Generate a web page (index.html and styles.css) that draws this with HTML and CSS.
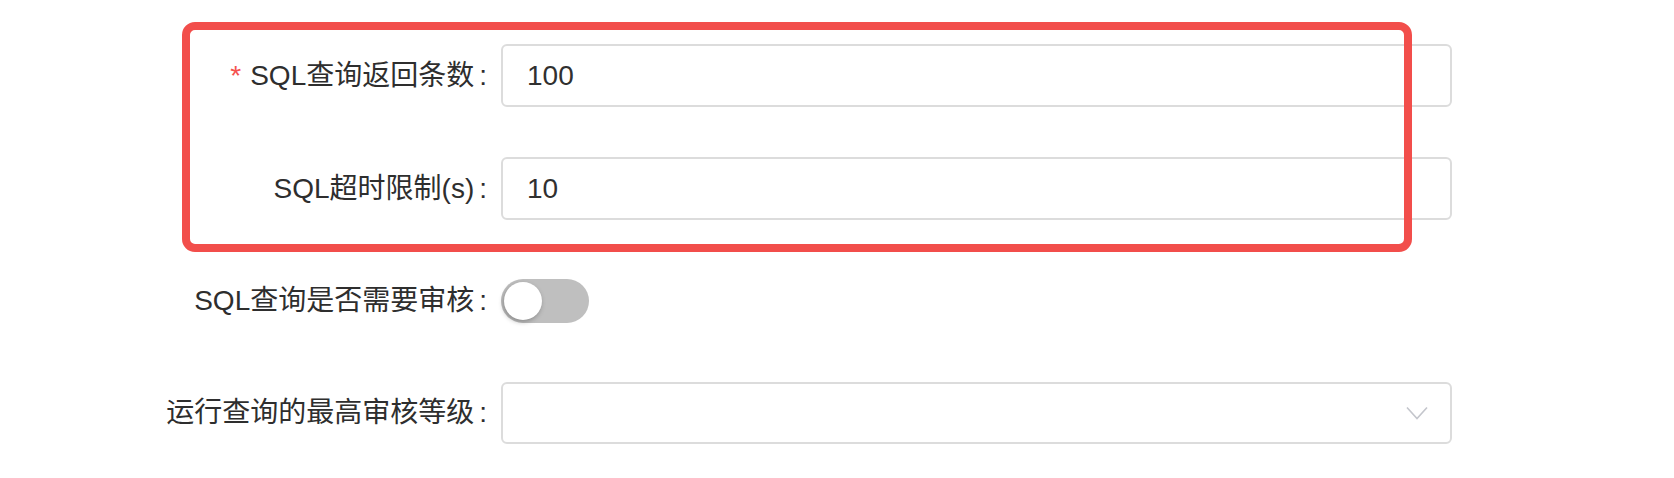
FILE: index.html
```html
<!DOCTYPE html>
<html lang="zh-CN">
<head>
<meta charset="utf-8">
<title>SQL 查询设置</title>
<link rel="stylesheet" href="styles.css">
</head>
<body>
<div class="page">
  <form class="form">
    <div class="row row-first">
      <label class="label"><span class="req">*</span>SQL查询返回条数<span class="colon">:</span></label>
      <input class="input" type="text" value="100">
    </div>
    <div class="row">
      <label class="label">SQL超时限制(s)<span class="colon">:</span></label>
      <input class="input" type="text" value="10">
    </div>
    <div class="row">
      <label class="label">SQL查询是否需要审核<span class="colon">:</span></label>
      <span class="switch"><span class="knob"></span></span>
    </div>
    <div class="row">
      <label class="label">运行查询的最高审核等级<span class="colon">:</span></label>
      <div class="select">
        <svg class="chevron" width="22" height="14" viewBox="0 0 22 14"><polyline points="1,1.5 11,12.5 21,1.5" fill="none" stroke="#c4c6cc" stroke-width="1.6" stroke-linejoin="miter"/></svg>
      </div>
    </div>
  </form>
  <div class="highlight"></div>
</div>
</body>
</html>
```

FILE: styles.css
```css
html, body {
  margin: 0;
  padding: 0;
  background: #ffffff;
}

body {
  font-family: "Liberation Sans", "Noto Sans CJK SC", sans-serif;
}

.page {
  position: relative;
  width: 1674px;
  height: 478px;
  overflow: hidden;
}

.form {
  padding-top: 44px;
}

.row {
  display: flex;
  align-items: center;
  height: 63px;
  margin-bottom: 49px;
}

.row-first {
  margin-bottom: 50px;
}

.label {
  width: 501px;
  box-sizing: border-box;
  padding-right: 14px;
  text-align: right;
  font-size: 28px;
  line-height: 63px;
  color: #2e2e2e;
  white-space: nowrap;
}

.colon {
  margin-left: 5px;
}

.req {
  color: #f5524f;
  margin-right: 9px;
}

.input {
  width: 951px;
  height: 63px;
  box-sizing: border-box;
  margin: 0;
  border: 2px solid #dcdcdc;
  border-radius: 6px;
  padding: 0 24px;
  font-family: "Liberation Sans", "Noto Sans CJK SC", sans-serif;
  font-size: 28px;
  color: #303030;
  background: #ffffff;
  outline: none;
}

.switch {
  display: flex;
  align-items: center;
  width: 88px;
  height: 44px;
  box-sizing: border-box;
  padding: 0 3px;
  border-radius: 22px;
  background: #bfbfbf;
}

.knob {
  width: 38px;
  height: 38px;
  border-radius: 50%;
  background: #ffffff;
  box-shadow: -1px 2px 5px rgba(0, 0, 0, 0.28);
}

.select {
  display: flex;
  align-items: center;
  justify-content: flex-end;
  width: 951px;
  height: 62px;
  box-sizing: border-box;
  border: 2px solid #dcdcdc;
  border-radius: 6px;
  padding-right: 22px;
}

.chevron {
  display: block;
}

.highlight {
  position: absolute;
  left: 182px;
  top: 22px;
  width: 1230px;
  height: 230px;
  box-sizing: border-box;
  border: 8px solid #f24e4b;
  border-radius: 13px;
  pointer-events: none;
}
```
